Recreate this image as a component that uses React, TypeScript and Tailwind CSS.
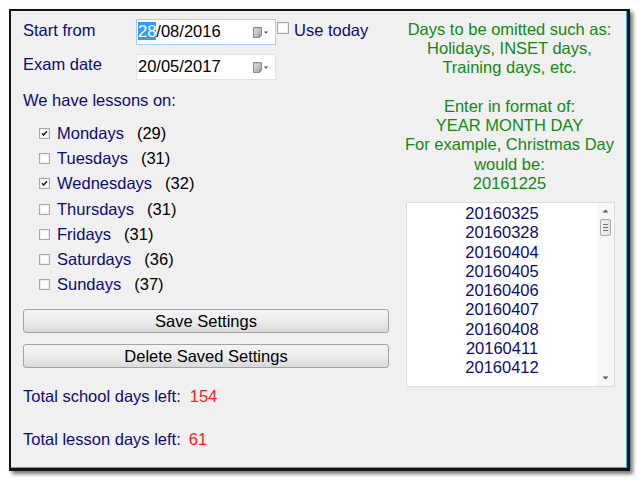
import React from "react";

const font = { fontFamily: '"Liberation Sans", Arial, sans-serif' };

function CalIcon() {
  return (
    <svg width="16" height="12" viewBox="0 0 16 12" className="shrink-0">
      <defs>
        <linearGradient id="pg" x1="0" y1="0" x2="1" y2="1">
          <stop offset="0" stopColor="#e8e8e8" />
          <stop offset="1" stopColor="#9a9a9a" />
        </linearGradient>
      </defs>
      <path d="M0.5 0.5 H8.5 V8 L6.5 10.5 H0.5 Z" fill="url(#pg)" stroke="#8a8a8a" />
      <path d="M6.5 10.5 V8 H8.5" fill="#cfcfcf" stroke="#8a8a8a" />
      <line x1="1.5" y1="1.5" x2="7.5" y2="1.5" stroke="#bbbbbb" />
      <path d="M11 4.5 H15 L13 6.8 Z" fill="#3a4a6a" />
    </svg>
  );
}

function Check({ checked, size = 11 }: { checked?: boolean; size?: number }) {
  return (
    <svg width={size} height={size} viewBox={`0 0 ${size} ${size}`} className="shrink-0">
      <rect x="0.5" y="0.5" width={size - 1} height={size - 1} fill="#ffffff" stroke="#a7a7a7" />
      <rect x="1.5" y="1.5" width={size - 3} height={size - 3} fill="none" stroke="#eeeeee" />
      {checked && <path d="M3 5.2 L4.6 7 L8 3.2" fill="none" stroke="#222" strokeWidth="1.5" />}
    </svg>
  );
}

function DateBox({ focused, children }: { focused?: boolean; children: React.ReactNode }) {
  return (
    <div
      className={`w-[140px] h-[26px] bg-white border flex items-start pt-[2px] pl-[1px] pr-[6px] ${
        focused ? "border-[#a9cdf2]" : "border-[#e2e2e2]"
      }`}
    >
      <div className="flex-1 text-[16.5px] leading-[18px] text-black whitespace-nowrap">{children}</div>
      <div className="mt-[5px]">
        <CalIcon />
      </div>
    </div>
  );
}

const days: [string, string, boolean][] = [
  ["Mondays", "(29)", true],
  ["Tuesdays", "(31)", false],
  ["Wednesdays", "(32)", true],
  ["Thursdays", "(31)", false],
  ["Fridays", "(31)", false],
  ["Saturdays", "(36)", false],
  ["Sundays", "(37)", false],
];

const dates = [
  "20160325",
  "20160328",
  "20160404",
  "20160405",
  "20160406",
  "20160407",
  "20160408",
  "20160411",
  "20160412",
];

function Button({ label }: { label: string }) {
  return (
    <div className="h-[24px] w-full rounded-[3px] border border-[#a3a3a3] bg-gradient-to-b from-[#f4f4f4] via-[#ececec] to-[#d9d9d9] flex items-center justify-center text-[16.5px] leading-[18px] text-black">
      {label}
    </div>
  );
}

export default function App() {
  return (
    <div className="w-[639px] h-[480px] bg-white overflow-hidden" style={font}>
      <div className="ml-[9px] mt-[9px] w-[621px] h-[462px] border-t-2 border-l-2 border-r-[3px] border-b-[3px] border-[#151515] shadow-[3px_3px_4px_rgba(0,0,0,0.55)]">
        <div className="w-full h-full bg-[#f0f0f0] border-r border-b border-[#3ab4e4] flex">
          {/* Left column */}
          <div className="w-[379px] shrink-0 pl-[12px] pt-[8px] flex flex-col text-[16.5px] leading-[18px] text-[#0c0c72]">
            <div className="flex items-start h-[26px]">
              <div className="w-[113px] pt-[2px]">Start from</div>
              <DateBox focused>
                <span className="bg-[#3399ff] text-white">28</span>/08/2016
              </DateBox>
              <div className="ml-[1px] mt-[3px]">
                <Check size={12} />
              </div>
              <div className="ml-[5px] pt-[2px] whitespace-nowrap">Use today</div>
            </div>
            <div className="flex items-start h-[26px] mt-[9px]">
              <div className="w-[113px] pt-[1px]">Exam date</div>
              <DateBox>20/05/2017</DateBox>
            </div>
            <div className="mt-[11px]">We have lessons on:</div>
            <div className="mt-[15px] flex flex-col">
              {days.map(([d, c, ch]) => (
                <div key={d} className="h-[25.2px] flex items-start">
                  <div className="pl-[16px] pt-[4px]">
                    <Check checked={ch} />
                  </div>
                  <div className="ml-[7px]">{d}</div>
                  <div className="ml-[13px] text-black">{c}</div>
                </div>
              ))}
            </div>
            <div className="mt-[9px] w-[366px]">
              <Button label="Save Settings" />
              <div className="mt-[11px]">
                <Button label="Delete Saved Settings" />
              </div>
            </div>
            <div className="mt-[19px] flex">
              <span>Total school days left:</span>
              <span className="ml-[9px] text-[#ff1a1a]">154</span>
            </div>
            <div className="mt-[25px] flex">
              <span>Total lesson days left:</span>
              <span className="ml-[8px] text-[#ff1a1a]">61</span>
            </div>
          </div>

          {/* Right column */}
          <div className="w-[213px] shrink-0 ml-[13px] pt-[8.5px] flex flex-col items-center text-[16.5px]">
            <div className="text-center leading-[19.3px] text-[#118a11] whitespace-nowrap">
              <div>Days to be omitted such as:</div>
              <div>Holidays, INSET days,</div>
              <div>Training days, etc.</div>
              <div>&nbsp;</div>
              <div>Enter in format of:</div>
              <div>YEAR MONTH DAY</div>
              <div>For example, Christmas Day</div>
              <div>would be:</div>
              <div>20161225</div>
            </div>
            <div className="mt-[9px] ml-[3px] self-start w-[209px] h-[185px] bg-white border border-[#dcdcdc] flex overflow-hidden">
              <div className="flex-1 pt-[1px] flex flex-col items-center leading-[19.25px] text-[#0c0c72]">
                {dates.map((d) => (
                  <div key={d}>{d}</div>
                ))}
              </div>
              <div className="w-[17px] h-full bg-[#f7f7f7] flex flex-col items-center">
                <svg width="7" height="4" viewBox="0 0 7 4" className="mt-[6px]">
                  <path d="M0.5 3.5 L3.5 0.5 L6.5 3.5 Z" fill="#555" />
                </svg>
                <div className="mt-[6px] w-[11px] h-[17px] rounded-[2px] border border-[#a8a8a8] bg-gradient-to-r from-[#f2f2f2] to-[#e0e0e0] flex flex-col items-center justify-center gap-[2px]">
                  <div className="w-[5px] h-px bg-[#777]" />
                  <div className="w-[5px] h-px bg-[#777]" />
                  <div className="w-[5px] h-px bg-[#777]" />
                </div>
                <div className="flex-1" />
                <svg width="7" height="4" viewBox="0 0 7 4" className="mb-[6px]">
                  <path d="M0.5 0.5 L3.5 3.5 L6.5 0.5 Z" fill="#555" />
                </svg>
              </div>
            </div>
          </div>
        </div>
      </div>
    </div>
  );
}
